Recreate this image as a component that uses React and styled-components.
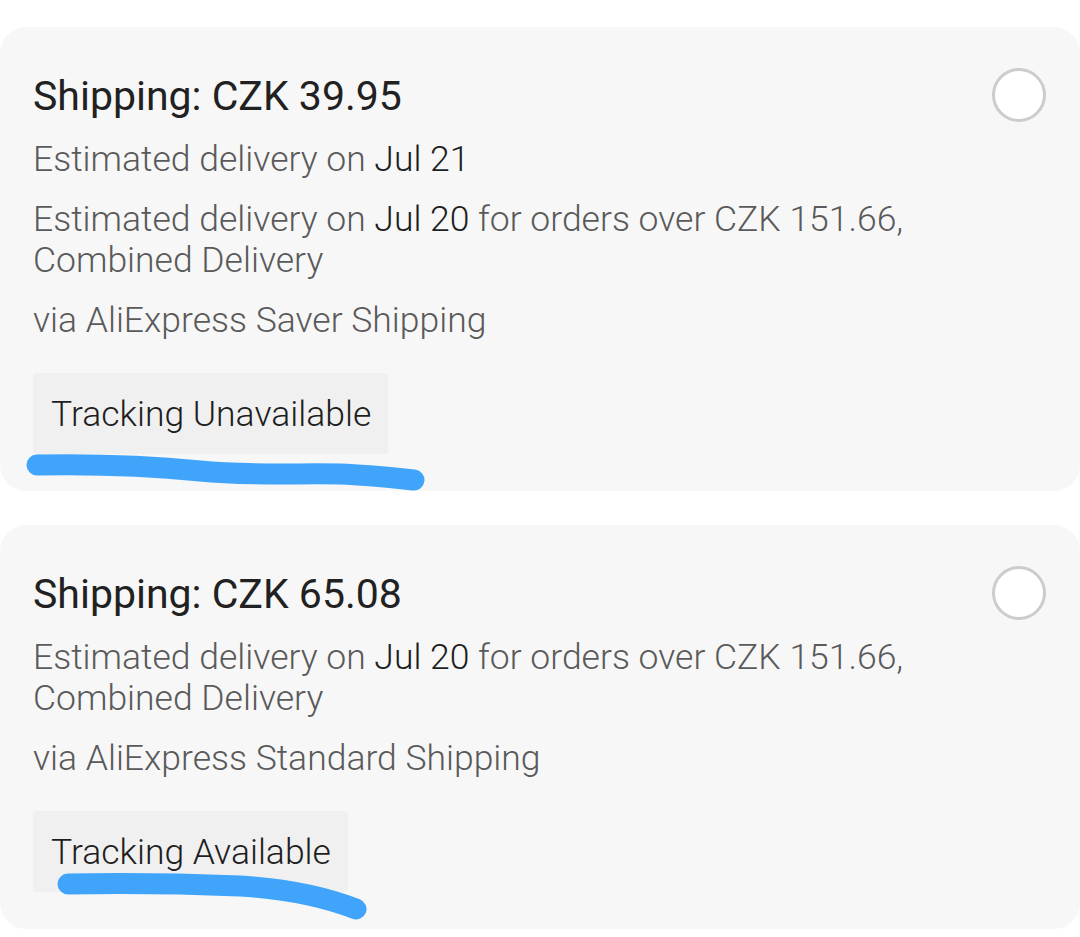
import React from "react";
import styled, { createGlobalStyle } from "styled-components";

const Global = createGlobalStyle`
  html, body { margin: 0; padding: 0; background: #ffffff; }
  body { font-family: Roboto, "Noto Sans", Arial, sans-serif; -webkit-font-smoothing: antialiased; }
`;

const Page = styled.div`
  display: flex;
  flex-direction: column;
  gap: 34px;
  padding: 27px 0 10px;
  width: 1080px;
`;

const Card = styled.section`
  position: relative;
  display: flex;
  align-items: flex-start;
  gap: 20px;
  background: #f7f7f7;
  border-radius: 26px;
  padding: 45px 34px 37px 33px;
`;

const Content = styled.div`
  flex: 1;
  display: flex;
  flex-direction: column;
  gap: 19px;
`;

const Title = styled.h2`
  margin: 0;
  font-size: 41px;
  line-height: 48px;
  font-weight: 400;
  color: #212121;
`;

const Line = styled.p`
  margin: 0;
  font-size: 35.5px;
  line-height: 41px;
  font-weight: 300;
  color: #5a5a5a;
`;

const Strong = styled.span`
  color: #1e1e1e;
`;

const Tag = styled.div`
  align-self: flex-start;
  margin-top: 13px;
  padding: 21px 17px 19px 18px;
  background: #f0f0f0;
  border-radius: 4px;
  font-size: 35.5px;
  line-height: 41px;
  font-weight: 300;
  color: #1e1e1e;
`;

const Radio = styled.span`
  flex-shrink: 0;
  width: 54px;
  height: 54px;
  box-sizing: border-box;
  margin-top: -4px;
  border-radius: 50%;
  border: 3px solid #cccccc;
  background: #ffffff;
`;

const Scribble = styled.svg`
  position: absolute;
  left: 0;
  top: 0;
  width: 100%;
  height: 100%;
  pointer-events: none;
  overflow: visible;
`;

const Stroke = styled.path`
  fill: none;
  stroke: #3fa4fa;
  stroke-width: 21;
  stroke-linecap: round;
  stroke-linejoin: round;
`;

const options = [
  {
    price: "CZK 39.95",
    lines: [
      [["Estimated delivery on "], ["Jul 21", true]],
      [["Estimated delivery on "], ["Jul 20", true], [" for orders over CZK 151.66, Combined Delivery"]],
      [["via AliExpress Saver Shipping"]],
    ],
    tag: "Tracking Unavailable",
    scribble: "M37 438 C 90 437, 150 439, 200 444 C 250 449, 300 446, 340 447 C 370 448, 395 451, 414 453",
  },
  {
    price: "CZK 65.08",
    lines: [
      [["Estimated delivery on "], ["Jul 20", true], [" for orders over CZK 151.66, Combined Delivery"]],
      [["via AliExpress Standard Shipping"]],
    ],
    tag: "Tracking Available",
    scribble: "M68 359 C 120 358, 190 359, 240 361 C 290 364, 330 374, 356 384",
  },
];

export default function App() {
  return (
    <>
      <Global />
      <Page>
        {options.map((o, i) => (
          <Card key={i}>
            <Content>
              <Title>Shipping: {o.price}</Title>
              {o.lines.map((parts, j) => (
                <Line key={j}>
                  {parts.map(([t, strong], k) =>
                    strong ? <Strong key={k}>{t}</Strong> : <React.Fragment key={k}>{t}</React.Fragment>
                  )}
                </Line>
              ))}
              <Tag>{o.tag}</Tag>
            </Content>
            <Radio />
            <Scribble>
              <Stroke d={o.scribble} />
            </Scribble>
          </Card>
        ))}
      </Page>
    </>
  );
}
